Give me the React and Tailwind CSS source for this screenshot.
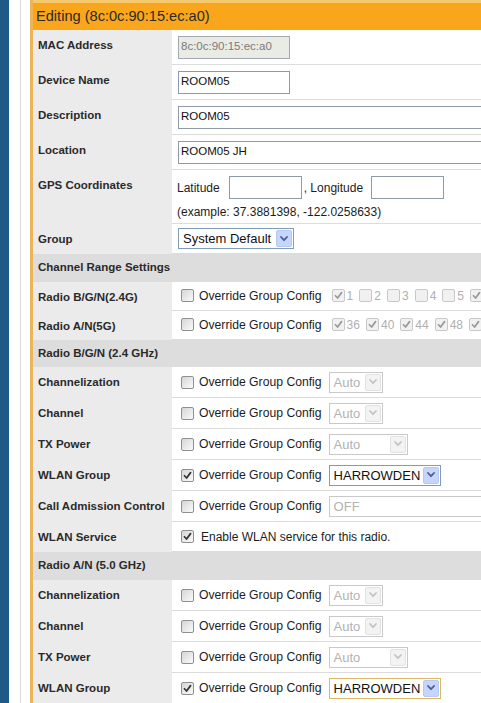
import React from "react";

function Check({ checked, disabled }) {
  return (
    <span
      className={
        disabled
          ? "inline-flex w-[13px] h-[13px] shrink-0 items-center justify-center rounded-[2px] border border-[#c8c8c8] bg-[#f1f1f1]"
          : "inline-flex w-[13px] h-[13px] shrink-0 items-center justify-center rounded-[2px] border border-[#8f9090] bg-gradient-to-br from-[#d6d6d6] to-[#fafafa]"
      }
    >
      {checked && (
        <svg viewBox="0 0 10 10" className="w-[9px] h-[9px]">
          <path
            d="M1.6 5.3 L4 7.8 L8.4 1.8"
            fill="none"
            stroke={disabled ? "#9a9a9a" : "#333"}
            strokeWidth="1.9"
            strokeLinecap="round"
            strokeLinejoin="round"
          />
        </svg>
      )}
    </span>
  );
}

function Chevron({ color }) {
  return (
    <svg viewBox="0 0 8 6" className="w-[8px] h-[6px]">
      <path d="M1 1 L4 4.2 L7 1" fill="none" stroke={color} strokeWidth="1.8" strokeLinecap="round" strokeLinejoin="round" />
    </svg>
  );
}

function Select({ text, className, disabled, focus }) {
  const box = disabled
    ? "flex items-center h-[21px] border border-[#c9c9c9] bg-white text-[#b2b2b2]"
    : focus
    ? "flex items-center h-[21px] border border-[#d9b965] bg-white text-[#111]"
    : "flex items-center h-[21px] border border-[#7f9db9] bg-white text-[#111]";
  return (
    <div className={box + " " + className}>
      <span className="flex-1 pl-[4px] text-[13px] leading-[19px] whitespace-nowrap overflow-hidden">{text}</span>
      <span
        className={
          disabled
            ? "w-[16px] h-[17px] mr-[1px] shrink-0 flex items-center justify-center rounded-[2px] border border-[#e2e2e2] bg-[#f3f3f3]"
            : "w-[16px] h-[17px] mr-[1px] shrink-0 flex items-center justify-center rounded-[2px] border border-[#b7c8f3] bg-[#c6d5fb]"
        }
      >
        <Chevron color={disabled ? "#c4c4c4" : "#4a5f8c"} />
      </span>
    </div>
  );
}

function Input({ value, className, disabled }) {
  return (
    <div
      className={
        (disabled
          ? "h-[23px] border border-[#a3a9ae] bg-[#ebebe6] text-[#7a7a7a] "
          : "h-[23px] border border-[#8e9ba6] bg-white text-[#111] ") +
        "flex items-center pl-[2px] text-[11.5px] whitespace-nowrap shrink-0 " +
        className
      }
    >
      {value}
    </div>
  );
}

function Row({ label, h, children }) {
  return (
    <div className={"flex shrink-0 " + h}>
      <div className="w-[139px] shrink-0 bg-[#ebebeb] pl-[5px] pt-[8px] text-[11.5px] leading-[14px] font-bold text-[#2a2a2a] whitespace-nowrap">
        {label}
      </div>
      <div className="flex-1 min-w-0 border-b border-[#dcdcdc] bg-white flex items-center">{children}</div>
    </div>
  );
}

function Section({ label, h }) {
  return (
    <div className={"shrink-0 bg-[#dddddd] pl-[5px] flex items-center text-[11.5px] font-bold text-[#2a2a2a] " + h}>
      {label}
    </div>
  );
}

function Override({ checked, children }) {
  return (
    <div className="flex items-center pl-[9px] whitespace-nowrap">
      <Check checked={checked} />
      <span className="ml-[5px] mr-[7px] text-[12.2px] text-[#1c1c1c]">Override Group Config</span>
      {children}
    </div>
  );
}

function ChanItem({ n, checked }) {
  return (
    <span className="flex items-center mr-[6px]">
      <Check checked={checked} disabled />
      {n && <span className="ml-[2px] text-[12px] text-[#b0b0b0]">{n}</span>}
    </span>
  );
}

export default function App() {
  return (
    <div className="w-[481px] h-[703px] overflow-hidden flex bg-white font-['Liberation_Sans',Arial,sans-serif]">
      <div className="w-[9px] shrink-0 bg-[#1f5a87]" />
      <div className="w-[11px] shrink-0" />
      <div className="w-px shrink-0 bg-[#dadada]" />
      <div className="w-[9px] shrink-0" />
      <div className="w-[600px] shrink-0 border-l-[3px] border-[#ecb55c] flex flex-col">
        <div className="h-[3px] shrink-0 bg-[#f7c96f]" />
        <div className="h-[27px] shrink-0 bg-[#faa61d] flex items-center pl-[3px] text-[14.6px] text-[#2a2a2a]">
          Editing (8c:0c:90:15:ec:a0)
        </div>
        <Row label="MAC Address" h="h-[35px]">
          <div className="pl-[6px]">
            <Input value="8c:0c:90:15:ec:a0" className="w-[112px]" disabled />
          </div>
        </Row>
        <Row label="Device Name" h="h-[35px]">
          <div className="pl-[6px]">
            <Input value="ROOM05" className="w-[112px]" />
          </div>
        </Row>
        <Row label="Description" h="h-[35px]">
          <div className="pl-[6px]">
            <Input value="ROOM05" className="w-[340px]" />
          </div>
        </Row>
        <Row label="Location" h="h-[35px]">
          <div className="pl-[6px]">
            <Input value="ROOM05 JH" className="w-[340px]" />
          </div>
        </Row>
        <div className="flex shrink-0 h-[54px]">
          <div className="w-[139px] shrink-0 bg-[#ebebeb] pl-[5px] pt-[8px] text-[11.5px] leading-[14px] font-bold text-[#2a2a2a]">
            GPS Coordinates
          </div>
          <div className="flex-1 border-b border-[#dcdcdc] bg-white pl-[5px] pt-[6px] text-[12px] text-[#1c1c1c]">
            <div className="flex items-center">
              <span className="mr-[9px]">Latitude</span>
              <Input value="" className="w-[73px]" />
              <span className="ml-[2px] mr-[8px]">, Longitude</span>
              <Input value="" className="w-[73px]" />
            </div>
            <div className="mt-[6px] leading-[14px]">(example: 37.3881398, -122.0258633)</div>
          </div>
        </div>
        <Row label="Group" h="h-[30px]">
          <div className="pl-[6px]">
            <Select text="System Default" className="w-[116px]" />
          </div>
        </Row>
        <Section label="Channel Range Settings" h="h-[28px]" />
        <Row label="Radio B/G/N(2.4G)" h="h-[29px]">
          <Override>
            <div className="flex items-center ml-[3px]">
              <ChanItem n="1" checked />
              <ChanItem n="2" />
              <ChanItem n="3" />
              <ChanItem n="4" />
              <ChanItem n="5" />
              <ChanItem checked />
            </div>
          </Override>
        </Row>
        <Row label="Radio A/N(5G)" h="h-[29px]">
          <Override>
            <div className="flex items-center ml-[3px]">
              <ChanItem n="36" checked />
              <ChanItem n="40" checked />
              <ChanItem n="44" checked />
              <ChanItem n="48" checked />
              <ChanItem checked />
            </div>
          </Override>
        </Row>
        <Section label="Radio B/G/N (2.4 GHz)" h="h-[27px]" />
        <Row label="Channelization" h="h-[31px]">
          <Override>
            <Select text="Auto" className="w-[54px]" disabled />
          </Override>
        </Row>
        <Row label="Channel" h="h-[31px]">
          <Override>
            <Select text="Auto" className="w-[54px]" disabled />
          </Override>
        </Row>
        <Row label="TX Power" h="h-[31px]">
          <Override>
            <Select text="Auto" className="w-[79px]" disabled />
          </Override>
        </Row>
        <Row label="WLAN Group" h="h-[31px]">
          <Override checked>
            <Select text="HARROWDEN" className="w-[112px]" />
          </Override>
        </Row>
        <Row label="Call Admission Control" h="h-[31px]">
          <Override>
            <Select text="OFF" className="w-[175px]" disabled />
          </Override>
        </Row>
        <Row label="WLAN Service" h="h-[30px]">
          <div className="flex items-center pl-[9px] whitespace-nowrap">
            <Check checked />
            <span className="ml-[7px] text-[12px] text-[#1c1c1c]">Enable WLAN service for this radio.</span>
          </div>
        </Row>
        <Section label="Radio A/N (5.0 GHz)" h="h-[28px]" />
        <Row label="Channelization" h="h-[31px]">
          <Override>
            <Select text="Auto" className="w-[54px]" disabled />
          </Override>
        </Row>
        <Row label="Channel" h="h-[31px]">
          <Override>
            <Select text="Auto" className="w-[54px]" disabled />
          </Override>
        </Row>
        <Row label="TX Power" h="h-[31px]">
          <Override>
            <Select text="Auto" className="w-[79px]" disabled />
          </Override>
        </Row>
        <Row label="WLAN Group" h="h-[31px]">
          <Override checked>
            <Select text="HARROWDEN" className="w-[112px]" focus />
          </Override>
        </Row>
      </div>
    </div>
  );
}
